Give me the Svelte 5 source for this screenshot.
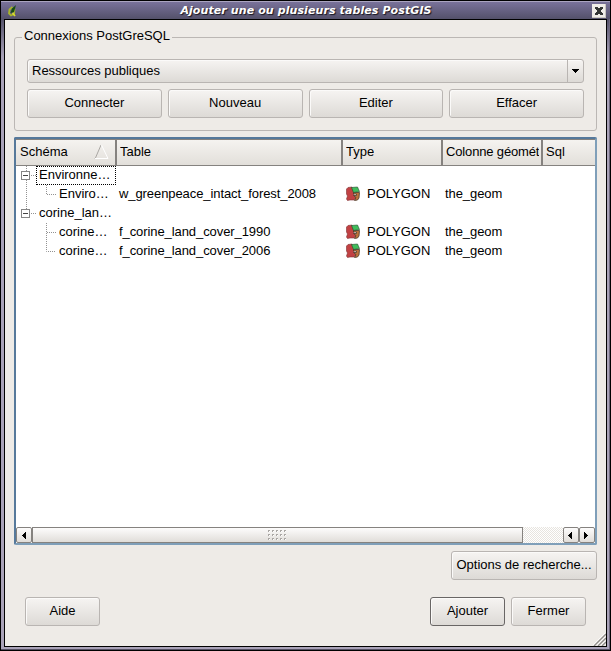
<script lang="ts">
  interface Row {
    schema: string;
    table?: string;
    geometry?: string;
    column?: string;
    branch: 'first' | 'parent' | 'last' | 'middle' | 'end';
  }

  const connectionActions = ['Connecter', 'Nouveau', 'Editer', 'Effacer'];
  const columns = ['Schéma', 'Table', 'Type', 'Colonne géomét', 'Sql'];

  const rows: Row[] = [
    { schema: 'Environne…', branch: 'first' },
    { schema: 'Enviro…', table: 'w_greenpeace_intact_forest_2008', geometry: 'POLYGON', column: 'the_geom', branch: 'last' },
    { schema: 'corine_lan…', branch: 'parent' },
    { schema: 'corine…', table: 'f_corine_land_cover_1990', geometry: 'POLYGON', column: 'the_geom', branch: 'middle' },
    { schema: 'corine…', table: 'f_corine_land_cover_2006', geometry: 'POLYGON', column: 'the_geom', branch: 'end' }
  ];

  const branches = {
    first: 'M10.5 0V5M10.5 14V19M15 9.5H20',
    parent: 'M10.5 0V5M15 9.5H20',
    last: 'M10.5 1V19M30.5 0V9.5H41',
    middle: 'M30.5 0V19M31 9.5H41',
    end: 'M30.5 1V9.5H41'
  };

  let selected = $state(0);

  function isGroup(row: Row) {
    return !row.table;
  }
</script>

<div class="window">
  <header class="titlebar">
    <svg class="app-icon" width="12" height="14" viewBox="0 0 12 14">
      <path d="M5.5 3L2.5 5.5L2 9.5L4 11.5L7 10L7.5 5" fill="none" stroke="#a9b52b" stroke-width="1.8" />
      <path d="M9 1L5 4.5L3.5 9L7 8Z" fill="#174e13" />
      <path d="M5.5 9L8 12" stroke="#d7dc2e" stroke-width="1.8" />
    </svg>
    <h1>Ajouter une ou plusieurs tables PostGIS</h1>
    <button class="close" aria-label="Fermer la fenêtre">
      <svg width="14" height="14" viewBox="0 0 14 14">
        <path d="M3 3H6V4H8V3H11V5H10V6H9V8H10V9H11V11H8V10H6V11H3V9H4V8H5V6H4V5H3Z" fill="#333534" />
      </svg>
    </button>
  </header>

  <main>
    <fieldset>
      <legend>Connexions PostGreSQL</legend>
      <div class="combo">
        <span>Ressources publiques</span>
        <i><svg width="8" height="4" viewBox="0 0 8 4"><path d="M0 0H7V1H6V2H5V3H4V4H3V3H2V2H1V1H0Z" /></svg></i>
      </div>
      <div class="actions">
        {#each connectionActions as action}
          <button class="btn">{action}</button>
        {/each}
      </div>
    </fieldset>

    <div class="tree">
      <div class="grid head">
        {#each columns as column, i}
          <div class="th">
            <span>{column}</span>
            {#if i === 0}
              <svg width="15" height="16" viewBox="0 0 15 16" fill="none">
                <path d="M1 15L7 1" stroke="#aaa7a3" />
                <path d="M7.5 1L14 14.5H1" stroke="#fff" />
              </svg>
            {/if}
          </div>
        {/each}
      </div>

      <div class="body">
        {#each rows as row, i}
          <!-- svelte-ignore a11y_click_events_have_key_events, a11y_no_static_element_interactions -->
          <div class="grid row" onclick={() => (selected = i)}>
            <div class="schema">
              <svg width={isGroup(row) ? 20 : 40} height="19" fill="none">
                <path d={branches[row.branch]} stroke="#929292" stroke-dasharray="1 1" />
                {#if isGroup(row)}
                  <rect x="5.5" y="5.5" width="8" height="8" fill="#fff" stroke="#858585" />
                  <path d="M7 9.5H12" stroke="#444" />
                {/if}
              </svg>
              <span class:focused={selected === i}>{row.schema}</span>
            </div>
            <div class="cell">{row.table ?? ''}</div>
            <div class="cell type">
              {#if row.geometry}
                <svg width="16" height="16" viewBox="0 0 16 16">
                  <path d="M3 1.5L7 1L9 7L8.5 9.5L11 11.5L9 14H5L2.5 14.5L1.5 13L2.5 10L1.5 8V3Z" fill="#c14143" stroke="#7d3032" stroke-width=".6" />
                  <path d="M8.5 6.5H14.5L14 12L12.5 14L9.5 14.5L11 11.5L8.5 9.5H11.5V8H8.5Z" fill="#bd733b" stroke="#4b392a" stroke-width=".8" />
                  <path d="M6.5 1.5L12.5 1L14.5 5.5L8.5 6.5Z" fill="#40bd5c" stroke="#244c2d" stroke-width=".6" />
                </svg>
                <span>{row.geometry}</span>
              {/if}
            </div>
            <div class="cell">{row.column ?? ''}</div>
            <div class="cell"></div>
          </div>
        {/each}
      </div>

      <div class="scrollbar">
        <button class="arrow" aria-label="Défiler à gauche">
          <svg width="4" height="7"><path d="M4 0V7H3V6H2V5H1V4H0V3H1V2H2V1H3V0Z" /></svg>
        </button>
        <div class="thumb">
          <svg width="19" height="11" viewBox="0 0 19 11">
            {#each [0, 4, 8] as y}
              {#each [0, 4, 8, 12, 16] as x}
                <path d="M{x} {y}h2v1h-1v1h-1z" fill="#aaa7a4" />
                <path d="M{x + 1} {y + 1}h1v1h-1z" fill="#fff" />
              {/each}
            {/each}
          </svg>
        </div>
        <div class="trough"></div>
        <button class="arrow end" aria-label="Défiler à gauche">
          <svg width="4" height="7"><path d="M4 0V7H3V6H2V5H1V4H0V3H1V2H2V1H3V0Z" /></svg>
        </button>
        <button class="arrow end" aria-label="Défiler à droite">
          <svg width="4" height="7"><path d="M0 0V7H1V6H2V5H3V4H4V3H3V2H2V1H1V0Z" /></svg>
        </button>
      </div>
    </div>

    <div class="options">
      <button class="btn">Options de recherche...</button>
    </div>

    <footer>
      <button class="btn">Aide</button>
      <span class="spacer"></span>
      <button class="btn default">Ajouter</button>
      <button class="btn">Fermer</button>
    </footer>

    <svg class="grip" width="13" height="13" viewBox="0 0 13 13">
      <path d="M1 13L13 1M5 13L13 5M9 13L13 9" stroke="#8e8b88" stroke-width="1.3" />
      <path d="M0 12L12 0M4 12L12 4M8 12L12 8" stroke="#fff" stroke-width=".8" />
    </svg>
  </main>
</div>

<style>
  * {
    box-sizing: border-box;
  }

  .window {
    display: flex;
    flex-direction: column;
    width: 611px;
    height: 651px;
    padding: 0 3px 3px;
    border: 1px solid #000;
    background: linear-gradient(#54516a 18px, #a9a2b8 56px);
    box-shadow: inset 0 -1px #555063, inset -1px 0 #706a80;
    font: 13px/15px 'Liberation Sans', Arial, sans-serif;
    color: #000;
  }

  .titlebar {
    display: flex;
    align-items: center;
    flex: none;
    height: 18px;
    margin: 0 -3px;
    padding: 0 4px 0 6px;
    border-top: 1px solid #aaa4c0;
    background: linear-gradient(#79729a, #54516a);
  }

  .titlebar h1 {
    flex: 1;
    margin: 0;
    padding-left: 1px;
    font: italic bold 11px/17px 'DejaVu Sans', sans-serif;
    letter-spacing: 0.1px;
    color: #fff;
    text-align: center;
    text-shadow: 1px 1px 1px #17151f;
    white-space: nowrap;
  }

  .close {
    width: 14px;
    height: 14px;
    padding: 0;
    border: 0;
    background: #efece8;
    box-shadow: inset -1px -1px #c9c6c0;
  }

  svg {
    display: block;
    flex: none;
  }

  main {
    position: relative;
    flex: 1;
    border: 1px solid #000;
    padding: 10px 9px 0;
    background: #eeebe7;
  }

  fieldset {
    height: 101px;
    margin: 0;
    padding: 14px 12px 0;
    border: 1px solid #bbb7b4;
    border-radius: 3px;
    min-width: 0;
  }

  legend {
    height: 15px;
    margin-left: -5px;
    padding: 0 2px;
    line-height: 11px;
  }

  .combo,
  .btn {
    border: 1px solid #b9b5b2;
    border-radius: 3px;
    background: linear-gradient(#f6f4f2, #dddad6);
    box-shadow: inset 1px 1px #fbfaf9;
  }

  .combo {
    display: flex;
    height: 24px;
    padding-left: 4px;
    line-height: 22px;
  }

  .combo span {
    flex: 1;
  }

  .combo i {
    display: flex;
    align-items: center;
    justify-content: center;
    width: 16px;
    border-left: 1px solid #b9b5b2;
  }

  .actions {
    display: flex;
    gap: 6px;
    margin-top: 6px;
  }

  .actions .btn {
    flex: 1;
  }

  .btn {
    height: 29px;
    padding: 0 0 2px;
    font: inherit;
    color: #000;
    white-space: nowrap;
  }

  .tree {
    display: flex;
    flex-direction: column;
    height: 408px;
    margin-top: 6px;
    border: 2px solid #7f9fb9;
    border-top-color: #56799b;
    border-left-color: #56799b;
    border-radius: 2px;
    background: #fff;
  }

  .grid {
    display: grid;
    grid-template-columns: 100px 226px 100px 100px 53px;
  }

  .head {
    grid-template-columns: 101px 226px 100px 100px 52px;
    height: 27px;
    border-top: 1px solid #85827f;
    border-bottom: 1px solid #85827f;
    background: linear-gradient(#f5f3f0, #e2dfda);
  }

  .th {
    display: flex;
    justify-content: space-between;
    padding: 0 6px 0 3px;
    border-right: 2px solid #85827f;
    line-height: 23px;
    white-space: nowrap;
    overflow: hidden;
  }

  .th svg {
    margin-top: 4px;
  }

  .th span {
    overflow: hidden;
  }

  .th:first-child {
    padding-left: 4px;
  }

  .th:last-child {
    border-right: 0;
  }

  .th:nth-child(4) {
    padding-right: 2px;
    letter-spacing: -0.15px;
  }

  .body {
    flex: 1;
  }

  .row {
    height: 19px;
    line-height: 17px;
    white-space: nowrap;
  }

  .schema {
    display: flex;
  }

  .schema span {
    flex: 1;
    height: 19px;
    padding-left: 2px;
    border: 1px dotted transparent;
    line-height: 15px;
  }

  .schema span.focused {
    border-color: #000;
  }

  .cell {
    padding-left: 3px;
    letter-spacing: -0.08px;
  }

  .type {
    display: flex;
    gap: 6px;
    letter-spacing: 0;
  }

  .type svg {
    margin-top: 1px;
  }

  .scrollbar {
    display: flex;
    height: 16px;
  }

  .arrow,
  .thumb {
    display: flex;
    align-items: center;
    justify-content: center;
    border: 1px solid #85827f;
    background: linear-gradient(#fdfcfc, #e0ddd9);
  }

  .arrow {
    width: 16px;
    padding: 0;
    border-radius: 2px;
  }

  .arrow.end {
    padding-right: 2px;
  }

  .thumb {
    width: 491px;
  }

  .trough {
    flex: 1;
    background: repeating-conic-gradient(#fff 0 25%, #e7e4df 0 50%) 0 0 / 2px 2px;
  }

  .options {
    display: flex;
    justify-content: flex-end;
    margin-top: 6px;
  }

  .options .btn {
    width: 146px;
  }

  footer {
    display: flex;
    gap: 6px;
    margin-top: 17px;
    padding: 0 11px;
  }

  footer .btn {
    width: 75px;
  }

  .spacer {
    flex: 1;
  }

  .btn.default {
    border-color: #696665;
  }

  .grip {
    position: absolute;
    right: 0;
    bottom: 0;
  }
</style>
